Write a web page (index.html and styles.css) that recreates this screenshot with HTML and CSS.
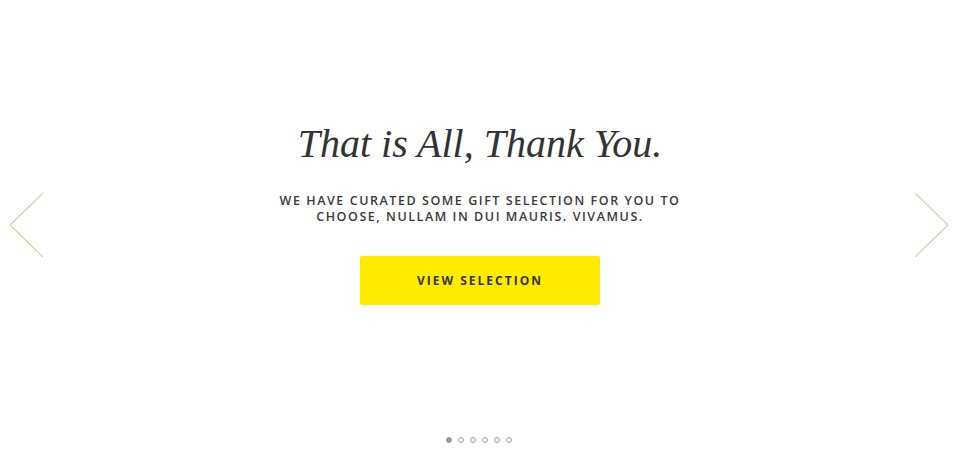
FILE: index.html
```html
<!DOCTYPE html>
<html>
<head>
<meta charset="utf-8">
<link rel="stylesheet" href="styles.css">
</head>
<body>
<div class="slider">
  <button class="arrow arrow-left" aria-label="Previous">
    <svg width="36" height="66" viewBox="0 0 36 66"><polyline points="34,1 1,33 34,65" fill="none" stroke="#d3d3a2" stroke-width="1.2"/></svg>
  </button>
  <div class="slide">
    <h1 class="title">That is All, Thank You.</h1>
    <p class="subtitle">We have curated some gift selection for you to<br>choose, nullam in dui mauris. Vivamus.</p>
    <a class="cta" href="#">View Selection</a>
  </div>
  <button class="arrow arrow-right" aria-label="Next">
    <svg width="36" height="66" viewBox="0 0 36 66"><polyline points="2,1 35,33 2,65" fill="none" stroke="#d3d3a2" stroke-width="1.2"/></svg>
  </button>
  <div class="dots">
    <span class="dot active"></span>
    <span class="dot"></span>
    <span class="dot"></span>
    <span class="dot"></span>
    <span class="dot"></span>
    <span class="dot"></span>
  </div>
</div>
</body>
</html>
```
FILE: styles.css
```css
html, body {
  margin: 0;
  padding: 0;
  background: #fff;
}
.slider {
  position: relative;
  width: 960px;
  height: 465px;
  display: flex;
  align-items: flex-start;
  justify-content: center;
}
.slide {
  display: flex;
  flex-direction: column;
  align-items: center;
  padding-top: 120px;
}
.title {
  margin: 0;
  font-family: "Liberation Serif", serif;
  font-style: italic;
  font-weight: normal;
  font-size: 40px;
  line-height: 48px;
  color: #333;
}
.subtitle {
  margin: 25px 0 0;
  font-family: "Open Sans", sans-serif;
  font-size: 12.5px;
  font-weight: 600;
  line-height: 16px;
  letter-spacing: 1.55px;
  text-transform: uppercase;
  text-align: center;
  color: #3a3a3a;
}
.cta {
  margin-top: 31px;
  width: 240px;
  height: 49px;
  display: flex;
  align-items: center;
  justify-content: center;
  background: #ffeb00;
  border-radius: 2px;
  font-family: "Open Sans", sans-serif;
  font-weight: 700;
  font-size: 12px;
  letter-spacing: 2px;
  text-transform: uppercase;
  color: #333;
  text-decoration: none;
}
.arrow {
  position: absolute;
  top: 192px;
  padding: 0;
  border: 0;
  background: none;
  line-height: 0;
}
.arrow-left { left: 9px; }
.arrow-right { right: 11px; }
.dots {
  position: absolute;
  left: 0;
  right: 0;
  bottom: 22px;
  display: flex;
  justify-content: center;
  gap: 6px;
  padding-right: 3px;
}
.dot {
  width: 4px;
  height: 4px;
  border: 1px solid #999;
  border-radius: 50%;
}
.dot.active {
  background: #999;
}
```
